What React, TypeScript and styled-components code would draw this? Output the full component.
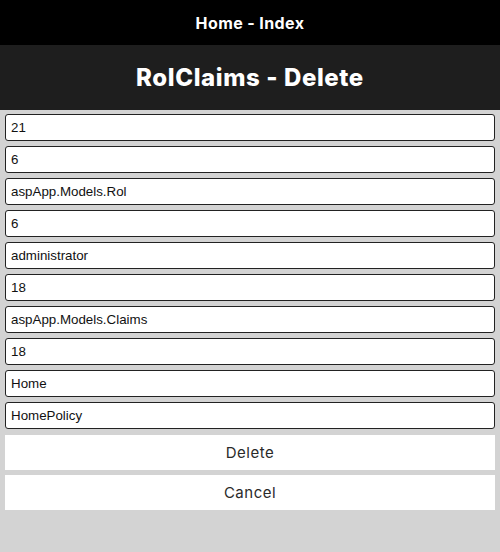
import { createGlobalStyle, styled } from "styled-components";

const GlobalStyle = createGlobalStyle`
  html, body {
    margin: 0;
    padding: 0;
    background: #d3d3d3;
  }
`;

const TopBar = styled.div`
  height: 45px;
  background: #000;
  color: #fff;
  display: flex;
  align-items: center;
  justify-content: center;
  font-family: "Inter", "Noto Sans", sans-serif;
  font-weight: 700;
  font-size: 16px;
  letter-spacing: 0.4px;
`;

const TitleBar = styled.div`
  height: 65px;
  background: #1e1e1e;
  color: #fff;
  display: flex;
  align-items: center;
  justify-content: center;
  font-family: "Inter", "Noto Sans", sans-serif;
  font-weight: 800;
  font-size: 24px;
  letter-spacing: 0.6px;
`;

const Form = styled.form`
  display: flex;
  flex-direction: column;
  gap: 5px;
  padding: 4px 5px 0;
`;

const Field = styled.input`
  box-sizing: border-box;
  height: 27px;
  width: 100%;
  margin: 0;
  padding: 0 5px;
  border: 1px solid #222;
  border-radius: 3px;
  background: #fff;
  color: #111;
  font-family: "Liberation Sans", Arial, sans-serif;
  font-size: 13.33px;
  outline: none;
`;

const Actions = styled.div`
  display: flex;
  flex-direction: column;
  gap: 5px;
  margin-top: 1px;
`;

const Button = styled.button`
  height: 35px;
  width: 100%;
  border: none;
  background: #fff;
  color: #2a2a2a;
  font-family: "Inter", "Noto Sans", sans-serif;
  font-size: 15px;
  font-weight: 400;
  letter-spacing: 0.5px;
  cursor: pointer;
`;

const values = [
  "21",
  "6",
  "aspApp.Models.Rol",
  "6",
  "administrator",
  "18",
  "aspApp.Models.Claims",
  "18",
  "Home",
  "HomePolicy",
];

export default function App() {
  return (
    <>
      <GlobalStyle />
      <TopBar>Home - Index</TopBar>
      <TitleBar>RolClaims - Delete</TitleBar>
      <Form onSubmit={(e) => e.preventDefault()}>
        {values.map((v, i) => (
          <Field key={i} defaultValue={v} readOnly />
        ))}
        <Actions>
          <Button type="submit">Delete</Button>
          <Button type="button">Cancel</Button>
        </Actions>
      </Form>
    </>
  );
}
